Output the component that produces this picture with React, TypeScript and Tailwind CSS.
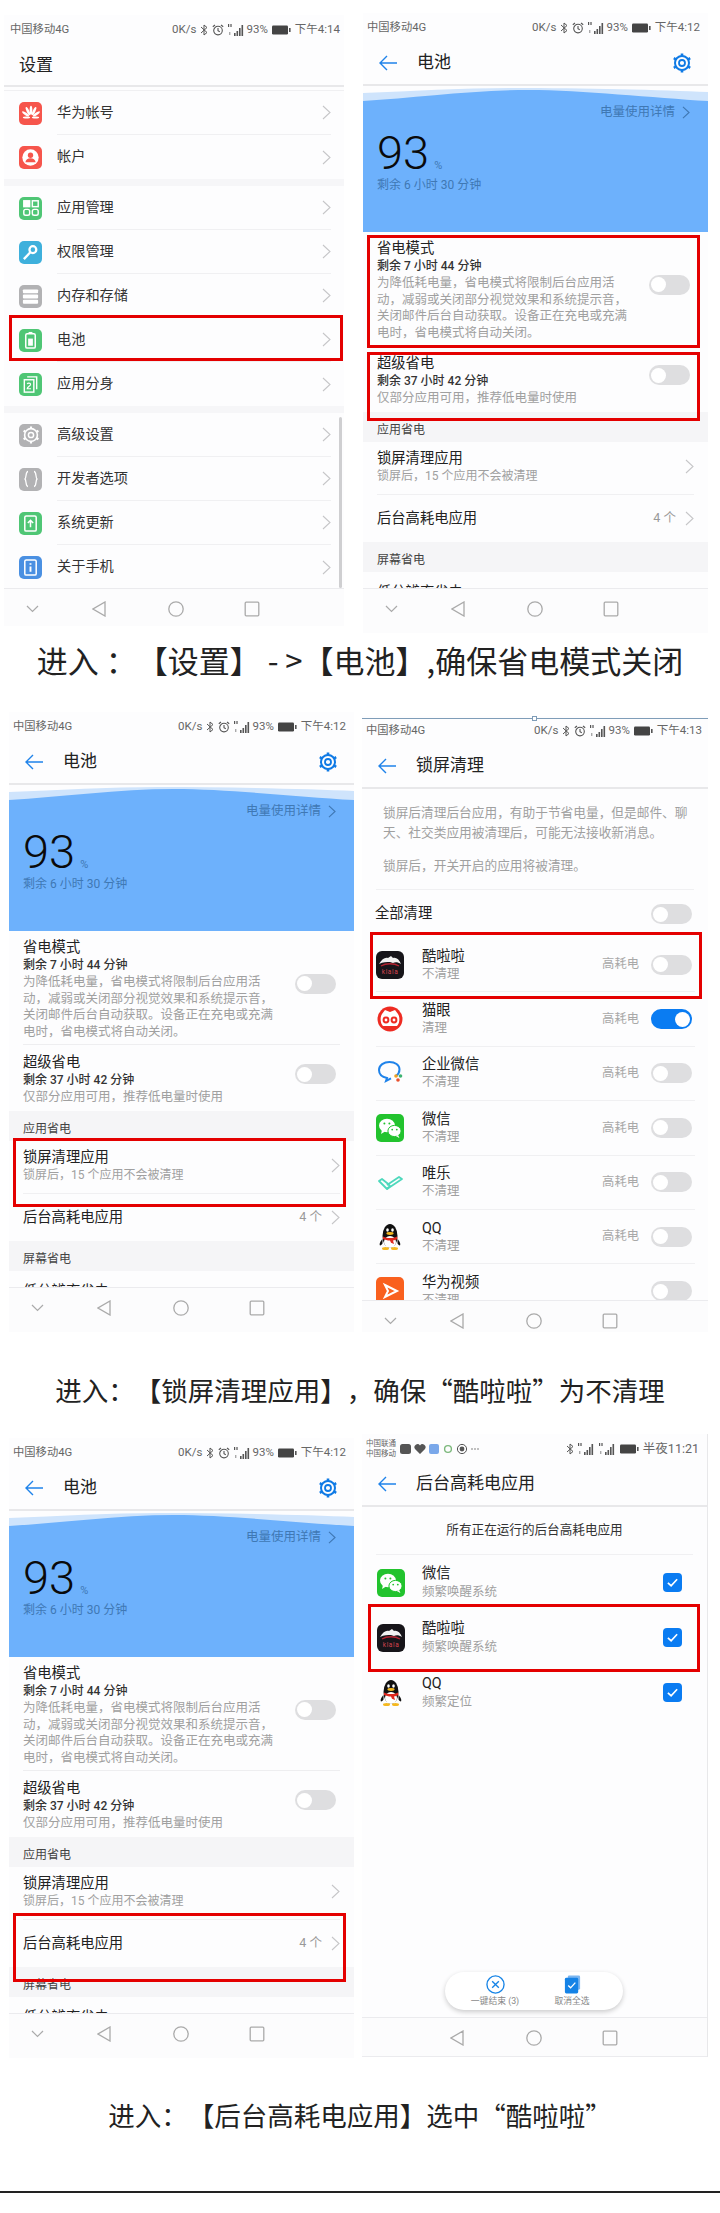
import React from 'react';

const Chevron = ({ className = 'h-[15px] w-[9px]' }: { className?: string }) => (
  <svg viewBox="0 0 9 15" className={className} fill="none" stroke="#c6c6c8" strokeWidth="1.1">
    <path d="M1 1l7 6.5L1 14" />
  </svg>
);

const BackArrow = () => (
  <svg viewBox="0 0 18 16" className="h-[16px] w-[18px]" fill="none" stroke="#1f83ea" strokeWidth="1.4">
    <path d="M18 8H1M8 1L1 8l7 7" />
  </svg>
);

const Gear = () => (
  <svg viewBox="0 0 20 20" className="h-[20px] w-[20px]" fill="none" stroke="#0f7ae5">
    <circle cx="10" cy="10" r="7" strokeWidth="2" />
    <circle cx="10" cy="10" r="3" strokeWidth="1.8" />
    <path d="M10 0.5v2.5M10 17v2.5M1.8 5.2l2.2 1.3M16 13.5l2.2 1.3M1.8 14.8l2.2-1.3M16 6.5l2.2-1.3" strokeWidth="2.6" />
  </svg>
);

const Bluetooth = () => (
  <svg viewBox="0 0 8 12" className="h-[12px] w-[8px]" fill="none" stroke="#555" strokeWidth="1">
    <path d="M1 3l6 5.5L4 11V1l3 2.5L1 9" />
  </svg>
);

const Alarm = () => (
  <svg viewBox="0 0 12 12" className="h-[12px] w-[12px]" fill="none" stroke="#555" strokeWidth="1.1">
    <circle cx="6" cy="6.6" r="4.3" />
    <path d="M6 4v2.8l1.8 1M0.8 2.8L3 1M11.2 2.8L9 1" />
  </svg>
);

const Signal = () => (
  <svg viewBox="0 0 17 12" className="h-[12px] w-[17px]" fill="#555">
    <rect x="0" y="0" width="1.2" height="3" />
    <rect x="2.4" y="0" width="1.2" height="3" />
    <rect x="1" y="8" width="1.4" height="3" opacity="0.5" />
    <rect x="6" y="9" width="1.6" height="3" />
    <rect x="8.5" y="7" width="1.6" height="5" />
    <rect x="11" y="4" width="1.6" height="8" />
    <rect x="13.5" y="1" width="1.6" height="11" />
  </svg>
);

const Battery = () => (
  <svg viewBox="0 0 19 10" className="h-[10px] w-[19px]">
    <rect x="0" y="0.5" width="16" height="9" rx="1.2" fill="#444" />
    <rect x="17" y="3" width="1.6" height="4" fill="#555" />
  </svg>
);

const StatusBar = ({ time, pad = 'pl-[4px] pr-[8px]' }: { time: string; pad?: string }) => (
  <div className={`flex h-[30px] shrink-0 items-center justify-between text-[#666] ${pad}`}>
    <span className="text-[11.3px]">中国移动4G</span>
    <div className="flex items-center gap-[4px] text-[11.5px]">
      <span>0K/s</span>
      <Bluetooth />
      <Alarm />
      <Signal />
      <span className="-ml-[3px]">93%</span>
      <Battery />
      <span>{time}</span>
    </div>
  </div>
);

const MultiStatusBar = () => (
  <div className="flex h-[30px] shrink-0 items-center justify-between pl-[4px] pr-[8px] text-[#666]">
    <div className="flex items-center gap-[4px]">
      <div className="text-[7.5px] leading-[10px]">
        <div>中国联通</div>
        <div>中国移动</div>
      </div>
      <svg viewBox="0 0 84 12" className="h-[12px] w-[84px]">
        <rect x="0" y="1" width="11" height="10" rx="2.5" fill="#555" />
        <path d="M20 11l-5-5a3 3 0 0 1 5-3.4a3 3 0 0 1 5 3.4z" fill="#555" />
        <rect x="29" y="1" width="10" height="10" rx="2" fill="#7aa8ea" />
        <circle cx="48" cy="6" r="3.4" fill="none" stroke="#7cb87c" strokeWidth="1.4" />
        <circle cx="62" cy="6" r="4.6" fill="none" stroke="#555" />
        <circle cx="62" cy="6" r="2.4" fill="#555" />
        <circle cx="72" cy="6" r="0.7" fill="#555" />
        <circle cx="75" cy="6" r="0.7" fill="#555" />
        <circle cx="78" cy="6" r="0.7" fill="#555" />
      </svg>
    </div>
    <div className="flex items-center gap-[4px] text-[12.5px]">
      <Bluetooth />
      <Signal />
      <Signal />
      <Battery />
      <span>半夜11:21</span>
    </div>
  </div>
);

const NavBar = ({ height, showChevron = true, bottom = false }: { height: string; showChevron?: boolean; bottom?: boolean }) => (
  <div className={`flex shrink-0 items-start border-t border-[#ebebee] bg-[#fcfcfd] pt-[12px] ${height} ${bottom ? 'border-b' : ''}`}>
    <div className="flex w-[56px] justify-center">
      {showChevron && (
        <svg viewBox="0 0 13 16" className="h-[16px] w-[13px]" fill="none" stroke="#aaa" strokeWidth="1.2">
          <path d="M1 5l5.5 5.5L12 5" />
        </svg>
      )}
    </div>
    <div className="flex w-[78px] justify-center">
      <svg viewBox="0 0 14 16" className="h-[16px] w-[14px]" fill="none" stroke="#aaa" strokeWidth="1.3">
        <path d="M13 1v14L1 8z" />
      </svg>
    </div>
    <div className="flex w-[76px] justify-center">
      <svg viewBox="0 0 16 16" className="h-[16px] w-[16px]" fill="none" stroke="#aaa" strokeWidth="1.3">
        <circle cx="8" cy="8" r="7.2" />
      </svg>
    </div>
    <div className="flex w-[76px] justify-center">
      <svg viewBox="0 0 16 16" className="h-[16px] w-[16px]" fill="none" stroke="#aaa" strokeWidth="1.3">
        <rect x="1.2" y="1.2" width="13.6" height="13.6" rx="1" />
      </svg>
    </div>
  </div>
);

const Header = ({ title, gear = false }: { title: string; gear?: boolean }) => (
  <div className="flex h-[43px] shrink-0 items-center border-b-2 border-[#e8e8ea] pb-[1px] pl-[16px] pr-[16px]">
    <BackArrow />
    <span className="ml-[20px] flex-1 text-[17px] text-[#222]">{title}</span>
    {gear && <Gear />}
  </div>
);

const Toggle = ({ on = false }: { on?: boolean }) => (
  <div className={`flex h-[20px] w-[41px] shrink-0 items-center rounded-full px-[2px] ${on ? 'justify-end bg-[#0a7cf2]' : 'bg-[#dedee0]'}`}>
    <div className="h-[15px] w-[15px] rounded-full bg-white" />
  </div>
);

const RedBox = ({ className }: { className: string }) => (
  <div className={`absolute border-[3px] border-[#e40000] ${className}`} />
);

const SectionLabel = ({ text }: { text: string }) => (
  <div className="flex h-[30px] items-end bg-[#f5f5f7] pb-[3px] pl-[14px] text-[12px] leading-[18px] text-[#444]">{text}</div>
);

const BatteryScreen = () => (
  <>
    <StatusBar time="下午4:12" />
    <Header title="电池" gear />
    <div className="min-h-0 flex-1 overflow-hidden pt-[2px]">
      <div className="h-[144px] bg-[#6db1fc]">
        <svg viewBox="0 0 345 14" preserveAspectRatio="none" className="block h-[14px] w-full">
          <rect width="345" height="14" fill="#fdfdfe" />
          <path d="M0 5C50 3 100 0 150 0C220 0 300 2 345 4V14H0Z" fill="#cfe4fc" />
          <path d="M0 13C50 10 110 2 165 2C220 2 290 10 345 13V14H0Z" fill="#6db1fc" />
        </svg>
        <div className="flex h-[20px] items-center justify-end gap-[7px] pr-[18px] text-[12.5px] text-[#3f78b4]">
          <span>电量使用详情</span>
          <svg viewBox="0 0 9 15" className="h-[13px] w-[8px]" fill="none" stroke="#3f78b4" strokeWidth="1.3">
            <path d="M1 1l7 6.5L1 14" />
          </svg>
        </div>
        <div className="flex h-[54px] items-end pl-[14px] pt-[8px]">
          <span className="text-[47px] font-light leading-[46px] text-[#0a0a0a]">93</span>
          <span className="mb-[3px] ml-[5px] text-[11px] leading-[14px] text-[#3f78b4]">%</span>
        </div>
        <div className="pl-[14px] text-[12px] leading-[18px] text-[#3f78b4]">剩余 6 小时 30 分钟</div>
      </div>
      <div className="mx-[14px] flex items-center justify-between border-b border-[#eeeef0] pb-[4px] pt-[6px]">
        <div>
          <div className="text-[14.3px] leading-[20px] text-[#222]">省电模式</div>
          <div className="text-[12px] font-medium leading-[17px] text-[#333]">剩余 7 小时 44 分钟</div>
          <div className="whitespace-nowrap text-[12.5px] leading-[16.5px] text-[#a0a0a0]">
            <div>为降低耗电量，省电模式将限制后台应用活</div>
            <div>动，减弱或关闭部分视觉效果和系统提示音，</div>
            <div>关闭邮件后台自动获取。设备正在充电或充满</div>
            <div>电时，省电模式将自动关闭。</div>
          </div>
        </div>
        <div className="-mt-[10px] mr-[4px]">
          <Toggle />
        </div>
      </div>
      <div className="mx-[14px] flex h-[66px] items-start justify-between pt-[7px]">
        <div>
          <div className="text-[14.3px] leading-[20px] text-[#222]">超级省电</div>
          <div className="text-[12px] font-medium leading-[16px] text-[#333]">剩余 37 小时 42 分钟</div>
          <div className="whitespace-nowrap text-[12.5px] leading-[17px] text-[#a0a0a0]">仅部分应用可用，推荐低电量时使用</div>
        </div>
        <div className="mr-[4px] mt-[12px]">
          <Toggle />
        </div>
      </div>
      <SectionLabel text="应用省电" />
      <div className="mx-[14px] flex h-[53px] items-center justify-between border-b border-[#f0f0f2] pb-[3px]">
        <div>
          <div className="text-[14.3px] leading-[19px] text-[#222]">锁屏清理应用</div>
          <div className="text-[12px] leading-[17px] text-[#a0a0a0]">锁屏后，15 个应用不会被清理</div>
        </div>
        <Chevron />
      </div>
      <div className="mx-[14px] flex h-[47px] items-center justify-between text-[14.3px] text-[#222]">
        <span>后台高耗电应用</span>
        <div className="flex items-center gap-[9px] text-[12.5px] text-[#999]">
          <span>4 个</span>
          <Chevron />
        </div>
      </div>
      <SectionLabel text="屏幕省电" />
      <div className="pl-[14px] pt-[10px] text-[14.3px] leading-[20px] text-[#222]">低分辨率省电</div>
    </div>
    <NavBar height="h-[45px]" />
  </>
);

const IconBox = ({ bg, children }: { bg: string; children: React.ReactNode }) => (
  <div className={`flex h-[23px] w-[23px] shrink-0 items-center justify-center rounded-[5px] ${bg}`}>{children}</div>
);

const settingGroups: { label: string; bg: string; icon: React.ReactNode }[][] = [
  [
    {
      label: '华为帐号',
      bg: 'bg-[#f6554c]',
      icon: (
        <svg viewBox="0 0 20 20" className="h-[18px] w-[18px]" fill="#fff">
          <ellipse cx="10" cy="7" rx="1.5" ry="5" />
          <ellipse cx="6.6" cy="8" rx="1.5" ry="5" transform="rotate(-25 6.6 8)" />
          <ellipse cx="13.4" cy="8" rx="1.5" ry="5" transform="rotate(25 13.4 8)" />
          <ellipse cx="4" cy="11" rx="1.4" ry="4.6" transform="rotate(-55 4 11)" />
          <ellipse cx="16" cy="11" rx="1.4" ry="4.6" transform="rotate(55 16 11)" />
          <ellipse cx="5" cy="15" rx="4" ry="1.2" />
          <ellipse cx="15" cy="15" rx="4" ry="1.2" />
        </svg>
      ),
    },
    {
      label: '帐户',
      bg: 'bg-[#f6554c]',
      icon: (
        <svg viewBox="0 0 20 20" className="h-[19px] w-[19px]">
          <circle cx="10" cy="10" r="8.6" fill="#fff" />
          <circle cx="10" cy="7.6" r="2.8" fill="#f6554c" />
          <path d="M4.6 15c.4-3 2.6-4.2 5.4-4.2s5 1.2 5.4 4.2z" fill="#f6554c" />
        </svg>
      ),
    },
  ],
  [
    {
      label: '应用管理',
      bg: 'bg-[#4fc675]',
      icon: (
        <svg viewBox="0 0 20 20" className="h-[18px] w-[18px]" fill="none" stroke="#fff" strokeWidth="1.6">
          <rect x="2" y="2" width="6.5" height="6.5" fill="#fff" />
          <rect x="11.5" y="2" width="6.5" height="6.5" />
          <rect x="2" y="11.5" width="6.5" height="6.5" rx="2" />
          <rect x="11.5" y="11.5" width="6.5" height="6.5" rx="2" />
        </svg>
      ),
    },
    {
      label: '权限管理',
      bg: 'bg-[#3eb0dc]',
      icon: (
        <svg viewBox="0 0 20 20" className="h-[19px] w-[19px]" fill="none" stroke="#fff">
          <circle cx="12.5" cy="7" r="3.6" strokeWidth="2.4" />
          <path d="M9.8 9.8L3 17" strokeWidth="2.4" />
        </svg>
      ),
    },
    {
      label: '内存和存储',
      bg: 'bg-[#b2b2b4]',
      icon: (
        <svg viewBox="0 0 20 20" className="h-[19px] w-[19px]" fill="#fff">
          <rect x="2" y="2.5" width="16" height="4" rx="1" />
          <rect x="2" y="8" width="16" height="4" rx="1" />
          <rect x="2" y="13.5" width="16" height="4" rx="1" />
        </svg>
      ),
    },
    {
      label: '电池',
      bg: 'bg-[#4fc675]',
      icon: (
        <svg viewBox="0 0 20 20" className="h-[19px] w-[19px]">
          <rect x="5" y="3" width="10" height="15" rx="1.5" fill="none" stroke="#fff" strokeWidth="1.6" />
          <rect x="8" y="1" width="4" height="2" fill="#fff" />
          <rect x="7.5" y="8" width="5" height="7.5" fill="#fff" />
        </svg>
      ),
    },
    {
      label: '应用分身',
      bg: 'bg-[#4fc675]',
      icon: (
        <svg viewBox="0 0 20 20" className="h-[19px] w-[19px]" fill="none" stroke="#fff" strokeWidth="1.5">
          <rect x="3.5" y="5" width="10" height="13" />
          <path d="M6.5 2h10v13" />
          <path d="M6.5 9.5c.6-1.4 3.6-1.2 3.6.5 0 1.4-3.6 2.6-3.6 4.5h4" strokeWidth="1.2" />
        </svg>
      ),
    },
  ],
  [
    {
      label: '高级设置',
      bg: 'bg-[#b2b2b4]',
      icon: (
        <svg viewBox="0 0 20 20" className="h-[20px] w-[20px]" fill="none" stroke="#fff">
          <circle cx="10" cy="10" r="6.4" strokeWidth="1.6" />
          <circle cx="10" cy="10" r="2.6" strokeWidth="1.5" />
          <path d="M10 1.5v2M10 16.5v2M2.6 5.8l1.7 1M15.7 13.2l1.7 1M2.6 14.2l1.7-1M15.7 6.8l1.7-1" strokeWidth="2.2" />
        </svg>
      ),
    },
    {
      label: '开发者选项',
      bg: 'bg-[#b2b2b4]',
      icon: (
        <svg viewBox="0 0 20 20" className="h-[20px] w-[20px]" fill="none" stroke="#fff" strokeWidth="1.3">
          <path d="M7 2.5c-2.5 0-1.5 6-3 7.5c1.5 1.5.5 7.5 3 7.5M13 2.5c2.5 0 1.5 6 3 7.5c-1.5 1.5-.5 7.5-3 7.5" />
        </svg>
      ),
    },
    {
      label: '系统更新',
      bg: 'bg-[#4fc675]',
      icon: (
        <svg viewBox="0 0 20 20" className="h-[19px] w-[19px]" fill="none" stroke="#fff" strokeWidth="1.6">
          <rect x="4" y="2" width="12" height="16" rx="1.5" />
          <path d="M10 14V7M7.2 9.5L10 6.6l2.8 2.9" />
        </svg>
      ),
    },
    {
      label: '关于手机',
      bg: 'bg-[#4a90e2]',
      icon: (
        <svg viewBox="0 0 20 20" className="h-[19px] w-[19px]" fill="none" stroke="#fff" strokeWidth="1.6">
          <rect x="4" y="2" width="12" height="16" rx="1.5" />
          <path d="M10 5.5v1.6M10 9v5.6" strokeWidth="2" />
        </svg>
      ),
    },
  ],
];

const SettingsScreen = () => (
  <>
    <StatusBar time="下午4:14" pad="pl-[6px] pr-[4px]" />
    <div className="flex h-[42px] shrink-0 items-center border-b-2 border-[#e8e8ea] pl-[15px] pt-[1px] text-[17px] text-[#222]">设置</div>
    <div className="min-h-0 flex-1 overflow-hidden pt-[3px]">
      {settingGroups.map((group, g) => (
        <div key={g} className={g > 0 ? 'border-t-[7px] border-[#f6f6f8]' : 'border-t border-[#f0f0f2]'}>
          {group.map((item, i) => (
            <div key={item.label} className="flex h-[44px] items-center pl-[15px]">
              <IconBox bg={item.bg}>{item.icon}</IconBox>
              <div className={`ml-[15px] mr-[13px] flex h-full flex-1 items-center justify-between text-[14.2px] text-[#333] ${i < group.length - 1 ? 'border-b border-[#f0f0f2]' : ''}`}>
                <span>{item.label}</span>
                <Chevron />
              </div>
            </div>
          ))}
        </div>
      ))}
    </div>
    <NavBar height="h-[38px]" />
  </>
);

const KulalaIcon = () => (
  <svg viewBox="0 0 28 28" className="h-[28px] w-[28px] shrink-0">
    <rect width="28" height="28" rx="6" fill="#17151a" />
    <path d="M3 13c3-5 6-7 9-6l3-2 2 2c3-1 6 1 8 6c-3-2-6-2-8-1l-3-1c-3 0-7 0-11 2z" fill="#f2f2f2" />
    <path d="M5 15c5-3 13-3 18 0" fill="none" stroke="#b32330" strokeWidth="1.4" />
    <text x="14" y="23" textAnchor="middle" fontSize="6.5" fontFamily="Roboto, sans-serif" fill="#d8434f" letterSpacing="0.6">klala</text>
  </svg>
);

const WechatIcon = () => (
  <svg viewBox="0 0 28 28" className="h-[28px] w-[28px] shrink-0">
    <rect width="28" height="28" rx="5" fill="#22c32e" />
    <ellipse cx="11" cy="11.5" rx="8" ry="6.8" fill="#fff" />
    <path d="M6 16l-1 4 4-2.4z" fill="#fff" />
    <ellipse cx="18.5" cy="17" rx="6.6" ry="5.6" fill="#fff" stroke="#22c32e" />
    <path d="M22 21l1.6 3-3.8-2z" fill="#fff" />
    <circle cx="8.4" cy="9.6" r="1" fill="#22c32e" />
    <circle cx="13.4" cy="9.6" r="1" fill="#22c32e" />
    <circle cx="16.2" cy="15.6" r="0.9" fill="#22c32e" />
    <circle cx="20.8" cy="15.6" r="0.9" fill="#22c32e" />
  </svg>
);

const QQIcon = () => (
  <svg viewBox="0 0 28 28" className="h-[28px] w-[28px] shrink-0">
    <ellipse cx="14" cy="13" rx="7.5" ry="12" fill="#111" />
    <path d="M6.5 16c-2 2-3.5 5-2.5 6.5c1-.3 2-1 2.5-2zM21.5 16c2 2 3.5 5 2.5 6.5c-1-.3-2-1-2.5-2z" fill="#111" />
    <ellipse cx="14" cy="19" rx="6" ry="6" fill="#fff" />
    <ellipse cx="11.5" cy="7" rx="1.3" ry="1.8" fill="#fff" />
    <ellipse cx="16.5" cy="7" rx="1.3" ry="1.8" fill="#fff" />
    <ellipse cx="14" cy="10.5" rx="3.6" ry="1.4" fill="#f5b81f" />
    <path d="M7 13.5c4 2 10 2 14 0l.5 2.5c-1.5.8-3 1.2-4.5 1.4l1 3.6-3-1.2-1-2.4c-2.5 0-5-.6-7.2-1.5z" fill="#e0281e" />
    <ellipse cx="9.5" cy="25.5" rx="3.5" ry="1.5" fill="#f5b81f" />
    <ellipse cx="18.5" cy="25.5" rx="3.5" ry="1.5" fill="#f5b81f" />
  </svg>
);

const cleanRows: { name: string; sub: string; drain: boolean; on?: boolean; icon: React.ReactNode }[] = [
  { name: '酷啦啦', sub: '不清理', drain: true, icon: <KulalaIcon /> },
  {
    name: '猫眼',
    sub: '清理',
    drain: true,
    on: true,
    icon: (
      <svg viewBox="0 0 28 28" className="h-[28px] w-[28px] shrink-0">
        <circle cx="14" cy="14" r="12.5" fill="#ee2b22" />
        <path d="M6 9l3-4 5 2 5-2 3 4c2 3 2 9-1 12H7C4 18 4 12 6 9z" fill="#fff" />
        <circle cx="10" cy="15" r="3.4" fill="#ee2b22" />
        <circle cx="18" cy="15" r="3.4" fill="#ee2b22" />
        <circle cx="10" cy="15" r="1.4" fill="#fff" />
        <circle cx="18" cy="15" r="1.4" fill="#fff" />
      </svg>
    ),
  },
  {
    name: '企业微信',
    sub: '不清理',
    drain: true,
    icon: (
      <svg viewBox="0 0 28 28" className="h-[28px] w-[28px] shrink-0">
        <path d="M20 17c2.5-2 3.5-4 3.5-6.5C23.5 6 19 3 13.5 3S3 6 3 11c0 4 3 7 8 8l-1 3 5-2.6" fill="none" stroke="#1f83ea" strokeWidth="2" />
        <circle cx="20" cy="17" r="1.8" fill="#f0a020" />
        <circle cx="24.5" cy="17" r="1.8" fill="#3cb371" />
        <circle cx="22" cy="21" r="1.8" fill="#e8502e" />
      </svg>
    ),
  },
  { name: '微信', sub: '不清理', drain: true, icon: <WechatIcon /> },
  {
    name: '唯乐',
    sub: '不清理',
    drain: true,
    icon: (
      <svg viewBox="0 0 28 28" className="h-[28px] w-[28px] shrink-0" fill="none" stroke="#4dd8bc" strokeWidth="1.8" strokeLinejoin="round">
        <path d="M3 13l3-2 5 4 3 3-3 3z" />
        <path d="M11 21l15-10-3-2-12 8" />
      </svg>
    ),
  },
  { name: 'QQ', sub: '不清理', drain: true, icon: <QQIcon /> },
  {
    name: '华为视频',
    sub: '不清理',
    drain: false,
    icon: (
      <svg viewBox="0 0 28 28" className="h-[28px] w-[28px] shrink-0">
        <rect width="28" height="28" rx="5" fill="#f9601e" />
        <path d="M9 8l12 6-12 6 3-6z" fill="none" stroke="#fff" strokeWidth="2" />
      </svg>
    ),
  },
];

const LockCleanScreen = () => (
  <>
    <StatusBar time="下午4:13" pad="pl-[4px] pr-[6px]" />
    <Header title="锁屏清理" />
    <div className="min-h-0 flex-1 overflow-hidden">
      <div className="mx-[14px] whitespace-nowrap border-b border-[#f0f0f2] pb-[13px] pl-[7px] pt-[14px] text-[12.7px] leading-[20px] text-[#a0a0a0]">
        <div>锁屏后清理后台应用，有助于节省电量，但是邮件、聊</div>
        <div>天、社交类应用被清理后，可能无法接收新消息。</div>
        <div className="mt-[13px]">锁屏后，开关开启的应用将被清理。</div>
      </div>
      <div className="mr-[16px] flex h-[48px] items-center justify-between pl-[13px] text-[14.3px] text-[#222]">
        <span>全部清理</span>
        <Toggle />
      </div>
      {cleanRows.map((row) => (
        <div key={row.name} className="ml-[14px] mr-[13px] flex h-[54.4px] items-center border-b border-[#f0f0f2] pr-[3px]">
          {row.icon}
          <div className="ml-[18px] flex-1">
            <div className="text-[14.3px] leading-[18px] text-[#222]">{row.name}</div>
            <div className="text-[12.5px] leading-[18px] text-[#a0a0a0]">{row.sub}</div>
          </div>
          {row.drain && <span className="mr-[12px] text-[12.3px] text-[#a8a8a8]">高耗电</span>}
          <Toggle on={row.on} />
        </div>
      ))}
    </div>
    <NavBar height="h-[32px]" />
  </>
);

const highDrainRows = [
  { name: '微信', sub: '频繁唤醒系统', icon: <WechatIcon /> },
  { name: '酷啦啦', sub: '频繁唤醒系统', icon: <KulalaIcon /> },
  { name: 'QQ', sub: '频繁定位', icon: <QQIcon /> },
];

const HighDrainScreen = () => (
  <>
    <MultiStatusBar />
    <Header title="后台高耗电应用" />
    <div className="relative min-h-0 flex-1 overflow-hidden">
      <div className="mx-[14px] flex h-[48px] items-center justify-center border-b border-[#f0f0f2] text-[12.6px] text-[#333]">所有正在运行的后台高耗电应用</div>
      {highDrainRows.map((row) => (
        <div key={row.name} className="ml-[15px] mr-[25px] flex h-[55px] items-center">
          {row.icon}
          <div className="ml-[17px] flex-1">
            <div className="text-[14.3px] leading-[19px] text-[#222]">{row.name}</div>
            <div className="text-[12.5px] leading-[18px] text-[#a0a0a0]">{row.sub}</div>
          </div>
          <div className="flex h-[19px] w-[19px] items-center justify-center rounded-[4px] bg-[#0a7cf2]">
            <svg viewBox="0 0 14 14" className="h-[13px] w-[13px]" fill="none" stroke="#fff" strokeWidth="1.8">
              <path d="M2 7.5l3.5 3L12 3.5" />
            </svg>
          </div>
        </div>
      ))}
      <div className="absolute left-[83px] top-[465px] flex h-[38px] w-[178px] rounded-full bg-white pl-[11px] pt-[3px] shadow-[0_2px_5px_rgba(0,0,0,0.2)]">
        <div className="flex w-[78px] flex-col items-center">
          <svg viewBox="0 0 20 20" className="h-[19px] w-[19px]" fill="none" stroke="#1583e6" strokeWidth="1.4">
            <circle cx="10" cy="10" r="9" />
            <path d="M6.5 6.5l7 7M13.5 6.5l-7 7" />
          </svg>
          <span className="whitespace-nowrap text-[8.8px] leading-[14px] text-[#888]">一键结束 (3)</span>
        </div>
        <div className="flex w-[76px] flex-col items-center">
          <svg viewBox="0 0 20 20" className="h-[19px] w-[19px]">
            <rect x="5" y="0.5" width="13" height="15" rx="1.5" fill="#7cb6f0" />
            <rect x="2" y="3" width="14" height="16.5" rx="1.5" fill="#1583e6" />
            <path d="M5.5 11l2.5 2.5L13 8" fill="none" stroke="#fff" strokeWidth="1.4" />
          </svg>
          <span className="whitespace-nowrap text-[8.8px] leading-[14px] text-[#888]">取消全选</span>
        </div>
      </div>
    </div>
    <NavBar height="h-[40px]" showChevron={false} bottom />
  </>
);

export default function App() {
  return (
    <div className="w-[720px] bg-white font-['Roboto','Noto_Sans_CJK_SC',sans-serif]">
      <div className="flex h-[633px] items-start">
        <div className="relative ml-[4px] mt-[15px] flex h-[611px] w-[340px] flex-col bg-[#fdfdfe]">
          <SettingsScreen />
          <div className="absolute right-[2px] top-[402px] h-[171px] w-[3px] rounded-full bg-[#cfcfd1]" />
          <RedBox className="left-[5px] top-[300px] h-[46px] w-[334px]" />
        </div>
        <div className="relative ml-[19px] mt-[13px] flex h-[620px] w-[345px] flex-col bg-[#fdfdfe]">
          <BatteryScreen />
          <RedBox className="left-[4px] top-[222px] h-[113px] w-[333px]" />
          <RedBox className="left-[4px] top-[339px] h-[69px] w-[333px]" />
        </div>
      </div>
      <div className="flex h-[55px] items-center justify-center whitespace-nowrap font-['Noto_Sans_CJK_SC',sans-serif] text-[31px] text-[#222] [text-spacing-trim:space-all]">进入 ：【设置】 - &gt;【电池】,确保省电模式关闭</div>

      <div className="flex h-[644px] items-start">
        <div className="relative ml-[9px] mt-[24px] flex h-[620px] w-[345px] flex-col bg-[#fdfdfe]">
          <BatteryScreen />
          <RedBox className="left-[4px] top-[426px] h-[69px] w-[333px]" />
        </div>
        <div className="relative ml-[8px] mt-[28px] flex h-[616px] w-[346px] flex-col bg-[#fdfdfe]">
          <div className="absolute left-0 top-[2px] h-px w-full bg-[#7f9db8]" />
          <div className="absolute left-[170px] top-[0px] h-[5px] w-[5px] border border-[#7f9db8] bg-white" />
          <LockCleanScreen />
          <RedBox className="left-[8px] top-[216px] h-[67px] w-[332px]" />
        </div>
      </div>
      <div className="flex h-[96px] items-center justify-center whitespace-nowrap pt-[20px] font-['Noto_Sans_CJK_SC',sans-serif] text-[26.5px] text-[#222] [text-spacing-trim:space-all]">进入：【锁屏清理应用】，确保“酷啦啦”为不清理</div>

      <div className="flex h-[630px] items-start">
        <div className="relative ml-[9px] mt-[10px] flex h-[620px] w-[345px] flex-col bg-[#fdfdfe]">
          <BatteryScreen />
          <RedBox className="left-[4px] top-[475px] h-[69px] w-[333px]" />
        </div>
        <div className="relative ml-[8px] mt-[6px] flex h-[623px] w-[346px] flex-col border-r border-[#e8e8ea] bg-[#fdfdfe]">
          <HighDrainScreen />
          <RedBox className="left-[6px] top-[170px] h-[68px] w-[332px]" />
        </div>
      </div>
      <div className="flex h-[114px] items-center justify-center whitespace-nowrap font-['Noto_Sans_CJK_SC',sans-serif] text-[26.5px] text-[#222] [text-spacing-trim:space-all]">进入：【后台高耗电应用】选中“酷啦啦”</div>
      <div className="mt-[19px] h-[2px] bg-[#222]" />
      <div className="h-[20px]" />
    </div>
  );
}
